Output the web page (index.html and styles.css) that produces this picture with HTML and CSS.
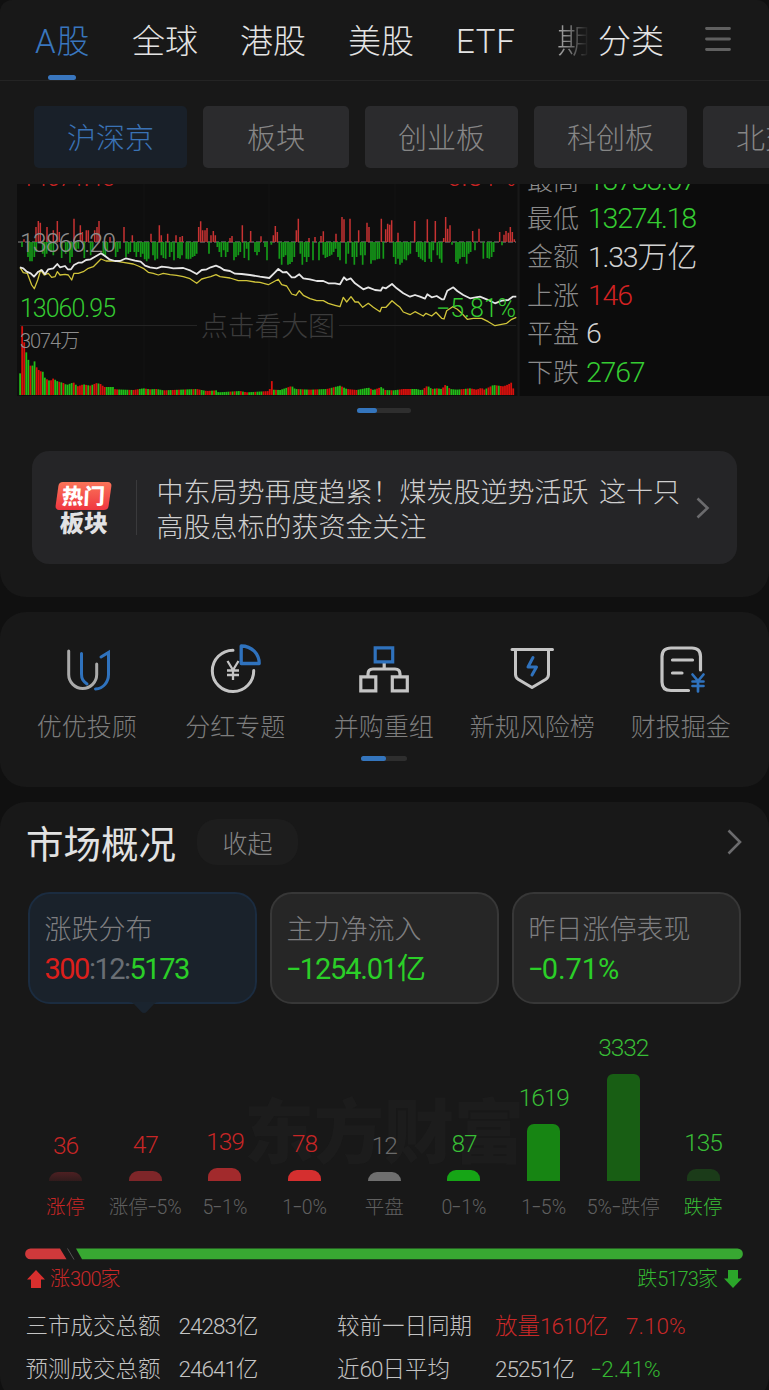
FILE: index.html
```
<!DOCTYPE html>
<html lang="zh-CN">
<head>
<meta charset="utf-8">
<title>行情</title>
<link rel="stylesheet" href="styles.css">
</head>
<body>
<section class="panel panel-top">
  <nav class="tabs">
    <span class="tab active">A股</span>
    <span class="tab">全球</span>
    <span class="tab">港股</span>
    <span class="tab">美股</span>
    <span class="tab etf">ETF</span>
    <span class="tab fading">期</span>
    <span class="tab last">分类</span>
    <svg class="menu" width="26" height="26" viewBox="0 0 26 26"><path d="M1.5 2.500h23M1.500 13h23M1.500 23.500h23" stroke="#606060" stroke-width="2.800" stroke-linecap="round"/></svg>
  </nav>
  <div class="pills">
    <span class="pill active">沪深京</span>
    <span class="pill short">板块</span>
    <span class="pill">创业板</span>
    <span class="pill">科创板</span>
    <span class="pill">北交所</span>
  </div>
  <div class="market">
    <svg class="chart" width="503" height="212" viewBox="17 184 503 212">
      <g id="chart-grid"></g>
      <text class="c-watermark" x="201" y="336" textLength="134">点击看大图</text>
      <g id="chart-plot"></g>
      <text class="c-num red" x="21" y="185.500" textLength="94">14671.45</text>
      <text class="c-num red" x="447" y="185.500" textLength="69">5.81%</text>
      <text class="c-num gray" x="20" y="251.500" textLength="96">13866.20</text>
      <text class="c-num green" x="20" y="317" textLength="96">13060.95</text>
      <text class="c-num green" x="436" y="317" textLength="80">−5.81%</text>
      <text class="c-vol" x="20" y="348" textLength="60">3074万</text>
    </svg>
    <dl class="quotes">
      <dt>最高</dt><dd class="green">13783.07</dd>
      <dt>最低</dt><dd class="green">13274.18</dd>
      <dt>金额</dt><dd>1.33<b>万亿</b></dd>
      <dt>上涨</dt><dd class="red">146</dd>
      <dt>平盘</dt><dd class="near">6</dd>
      <dt>下跌</dt><dd class="green near">2767</dd>
    </dl>
  </div>
  <div class="pager wide"><i></i></div>
  <div class="news">
    <div class="hot"><span class="hot-a"><em>热门</em></span><span class="hot-b">板块</span></div>
    <p>中东局势再度趋紧！煤炭股逆势活跃<span class="sp"> </span>这十只<br>高股息标的获资金关注</p>
    <svg width="16" height="24" viewBox="0 0 16 24"><path d="M2.500 2.500L12.500 12L2.500 21.500" fill="none" stroke="#6b6b6d" stroke-width="2.600"/></svg>
  </div>
</section>

<section class="panel panel-services">
  <div class="services">
    <div class="service">
      <svg width="54" height="54" viewBox="0 0 54 54" fill="none" stroke-width="3" stroke-linecap="round"><path d="M21.500 10.500v20.500c0 5 1.500 7 5.500 10M41 14l7.500-4.500v22c0 7.500-5 14-13 14.500" stroke="#2f72bd"/><path d="M8.700 8v23.500a14 14 0 0 0 28 0V21" stroke="#aaa"/></svg>
      <span>优优投顾</span>
    </div>
    <div class="service">
      <svg width="54" height="54" viewBox="0 0 54 54" fill="none" stroke-width="3"><path d="M25 7.200A20.700 20.700 0 1 0 45.700 27.500" stroke="#c4c4c4" stroke-linecap="round"/><path d="M19.500 18l5.500 9 5.500-9M25 27V37M19 27.500h12M19 32h12" stroke="#c4c4c4" stroke-width="2.300"/><path d="M33.200 3v17.500h18C51.200 11 44 3 33.200 3z" stroke="#2f72bd" stroke-width="3.300" stroke-linejoin="round"/></svg>
      <span>分红专题</span>
    </div>
    <div class="service">
      <svg width="54" height="54" viewBox="0 0 54 54" fill="none" stroke="#c4c4c4" stroke-width="3.200"><path d="M27.200 19v7M11 33v-2q0-5 5-5h22q5 0 5 5v2"/><path d="M3.800 33.800h15v14h-15zM35.300 33.800h15v14h-15z"/><path d="M18.200 4.800h17.500v14h-17.500z" stroke="#2f72bd"/></svg>
      <span>并购重组</span>
    </div>
    <div class="service">
      <svg width="54" height="54" viewBox="0 0 54 54" fill="none" stroke="#c4c4c4" stroke-width="3" stroke-linecap="round" stroke-linejoin="round"><path d="M7 6.500h40.500M10.500 6.500v25q0 3 3 5l13.500 8 13.500-8q3-2 3-5V6.500"/><path d="M28 14.500L23 24h8.500L27 32" stroke="#2f72bd"/></svg>
      <span>新规风险榜</span>
    </div>
    <div class="service">
      <svg width="54" height="54" viewBox="0 0 54 54" fill="none" stroke="#c4c4c4" stroke-width="3.200" stroke-linecap="round"><path d="M46.500 27V13.500q0-8.500-8.500-8.500H17q-9 0-9 8.500V39q0 8.500 9 8.500h17.500M18.500 17h20M18.500 30h9.500"/><path d="M38.500 31.500l5.500 6.500 5.500-6.500M44 38v10.500M38.500 38.500h11M38.500 43h11" stroke="#2f72bd" stroke-width="2.700"/></svg>
      <span>财报掘金</span>
    </div>
  </div>
  <div class="pager"><i></i></div>
</section>

<section class="panel panel-overview">
  <header class="overview-head">
    <h2>市场概况</h2>
    <span class="fold">收起</span>
    <svg width="17" height="28" viewBox="0 0 17 28"><path d="M2.500 2.500L14 14L2.500 25.500" fill="none" stroke="#6b6b6d" stroke-width="2.600"/></svg>
  </header>
  <div class="cards">
    <div class="card selected">
      <span class="card-label">涨跌分布</span>
      <span class="card-value ratio-value"><i class="red">300</i><i class="dim">:12:</i><i class="green">5173</i></span>
      <svg class="notch" width="30" height="13" viewBox="0 0 30 13"><path d="M0 0h30q-3 0-5 2l-7 7.500q-3 3-6 0L5 2Q3 0 0 0z" fill="#1a242f"/></svg>
    </div>
    <div class="card">
      <span class="card-label">主力净流入</span>
      <span class="card-value green"><s>-</s>1254.01<b>亿</b></span>
    </div>
    <div class="card">
      <span class="card-label">昨日涨停表现</span>
      <span class="card-value green loose"><s>-</s>0.71%</span>
    </div>
  </div>
  <div class="distribution">
    <div class="brand">东方财富</div>
    <div class="columns">
      <div class="col c1"><span>36</span><i></i><em>涨停</em></div>
      <div class="col c2"><span>47</span><i></i><em>涨停<s>-</s>5%</em></div>
      <div class="col c3"><span>139</span><i></i><em>5<s>-</s>1%</em></div>
      <div class="col c4"><span>78</span><i></i><em>1<s>-</s>0%</em></div>
      <div class="col c5"><span>12</span><i></i><em>平盘</em></div>
      <div class="col c6"><span>87</span><i></i><em>0<s>-</s>1%</em></div>
      <div class="col c7"><span>1619</span><i></i><em>1<s>-</s>5%</em></div>
      <div class="col c8"><span>3332</span><i></i><em>5%<s>-</s>跌停</em></div>
      <div class="col c9"><span>135</span><i></i><em>跌停</em></div>
    </div>
  </div>
  <svg class="ratio" width="718" height="12" viewBox="0 0 718 12"><path d="M5.500 .5H35L41.500 11.300H5.500a5.400 5.400 0 0 1 0-10.800z" fill="#cf393b"/><path d="M42.500 .5l6.500 11" stroke="#555"/><path d="M51 .5H712.500a5.400 5.400 0 0 1 0 10.800H57z" fill="#38a832"/></svg>
  <div class="ratio-legend">
    <span class="up"><svg width="18" height="18" viewBox="0 0 18 18"><path d="M9 0l9 9.500h-4V18H4V9.500H0z" fill="#d92f2e"/></svg>涨<i>300</i>家</span>
    <span class="down">跌<i>5173</i>家<svg width="18" height="18" viewBox="0 0 18 18"><path d="M9 18l9-9.500h-4V0H4V8.500H0z" fill="#2ba62a"/></svg></span>
  </div>
  <div class="totals">
    <span>三市成交总额</span><span><i>24283</i>亿</span><span>较前一日同期</span><span class="red">放量<i>1610</i>亿</span><span class="red pct1">7.10%</span>
    <span>预测成交总额</span><span><i>24641</i>亿</span><span>近<i>60</i>日平均</span><span><i>25251</i>亿</span><span class="green pct2"><s>-</s>2.41%</span>
  </div>
</section>
<script src="chart.js"></script>
</body>
</html>
```
FILE: styles.css
```
* { box-sizing: border-box; }
body {
  margin: 0;
  width: 769px;
  height: 1390px;
  overflow: hidden;
  background: #101010;
  color: #d2d2d2;
  font-family: Roboto, "Noto Sans CJK SC", sans-serif;
  font-weight: 300;
}
i, em { font-style: normal; }
b { font-weight: inherit; }
s { display: inline-block; text-decoration: none; font-family: Inter, sans-serif; letter-spacing: 0; line-height: 1; transform: translateY(-.03em) scaleX(1.2); }
p, h2, dl, dd { margin: 0; }
.red { color: #d32222; }
.green { color: #35cb32; }

.panel { background: #181818; border-radius: 26px; overflow: hidden; }
.panel-top { height: 597px; border-radius: 12px 12px 26px 26px; }
.panel-services { height: 175px; margin-top: 15px; }
.panel-overview { height: 600px; margin-top: 15px; padding: 17px 26px 0 25px; }

.tabs {
  display: flex;
  height: 81px;
  padding-left: 34px;
  border-bottom: 1px solid #242424;
  font-size: 33px;
  line-height: 83px;
  white-space: nowrap;
}
.tab { width: 108px; flex: none; color: #e4e4e4; }
.tab.active {
  position: relative;
  width: 98px;
  padding-left: 1px;
  color: #3976be;
  letter-spacing: .8px;
}
.tab.active::after {
  content: "";
  position: absolute;
  left: 14px;
  top: 75px;
  width: 28px;
  height: 5px;
  border-radius: 2.500px;
  background: #3976be;
}
.tab.etf { width: 101px; letter-spacing: .7px; }
.tab.fading {
  width: 41px;
  background: linear-gradient(90deg, #aaa 0, #777 40%, #2a2a2a 85%, #181818 100%);
  background-size: 33px 100%;
  background-repeat: no-repeat;
  background-clip: text;
  -webkit-background-clip: text;
  color: transparent;
}
.tab.last { width: 107px; }
.menu { margin-top: 26px; }

.pills { display: flex; gap: 16px; height: 103px; padding: 25px 0 0 34px; }
.pill {
  flex: none;
  width: 153px;
  height: 62px;
  border-radius: 5px;
  background: #2b2b2d;
  color: #868686;
  font-size: 29px;
  line-height: 67px;
  text-align: center;
}
.pill.short { width: 146px; }
.pill.active { background: #192029; color: #3a72b5; }
.market { display: flex; height: 212px; padding-left: 17px; background: linear-gradient(90deg, #181818 17px, #0c0c0c 17px); }
.chart { flex: none; overflow: hidden; background: #0e0e0e; }
.c-num { font-size: 25px; }
.c-num.red { fill: #c92323; }
.c-num.green { fill: #35cb32; }
.c-num.gray { fill: #8d8d8d; }
.c-vol { font-size: 20px; fill: #8d8d8d; }
.c-watermark { font-size: 27px; fill: #3b3b3b; }
.quotes {
  display: grid;
  grid-template-columns: 61px auto;
  grid-auto-rows: 38.400px;
  height: 212px;
  padding: 0 0 4px 7px;
  overflow: hidden;
  align-content: end;
  line-height: 38px;
  font-size: 26px;
  white-space: nowrap;
}
.quotes dt { color: #8b8b8b; }
.quotes dd { font-size: 28.500px; letter-spacing: -1.200px; }
.quotes dd.near { margin-left: -2px; }
.quotes dd b { font-size: 30px; letter-spacing: 0; }

.pager { width: 46px; height: 5px; border-radius: 3px; background: #2e2e2e; margin: 0 0 0 361px; }
.pager i { display: block; width: 25px; height: 5px; border-radius: 3px; background: #3475bd; }
.pager.wide { width: 54px; margin: 12px 0 0 357px; }
.pager.wide i { width: 20px; }

.news {
  display: flex;
  align-items: center;
  width: 705px;
  height: 113px;
  margin: 38px 0 0 32px;
  border-radius: 17px;
  background: #252527;
}
.hot {
  display: flex;
  flex-direction: column;
  width: 105px;
  height: 55px;
  padding-left: 25px;
  border-right: 1px solid #3a3a3c;
  font-weight: 900;
}
.hot-a {
  width: 53px;
  height: 28px;
  margin-top: 2px;
  flex: none;
  border-radius: 4px;
  background: linear-gradient(#fb7459, #ef3640);
  transform: skewX(-8deg);
  color: #fff;
  font-size: 21.500px;
  line-height: 29px;
  text-align: center;
}
.hot-a em { display: block; transform: skewX(5deg); }
.hot-b { width: 54px; font-size: 24px; line-height: 29px; color: #e2e2e4; transform: skewX(-3deg); text-align: center; }
.news p { width: 539px; padding: 7px 0 0 19.500px; font-size: 27px; line-height: 35px; white-space: nowrap; color: #cfcfcf; }
.sp { letter-spacing: 4px; }
.news svg { margin-left: 19px; }

.services { display: grid; grid-template-columns: repeat(5, 148.500px); height: 144px; padding: 31px 0 0 12.500px; }
.service { display: flex; flex-direction: column; align-items: center; font-size: 25px; line-height: 40px; color: #7d7d7d; white-space: nowrap; }
.service svg { margin-bottom: 11px; flex: none; }

.overview-head { display: flex; align-items: center; height: 46px; }
.overview-head h2 { width: 172px; padding: 5px 0 0 1px; font-size: 37.500px; line-height: 46px; font-weight: 400; color: #e2e2e2; }
.fold { width: 101px; height: 46px; border-radius: 20px; background: #1d1d1d; font-size: 25px; line-height: 51px; text-align: center; color: #858585; }
.overview-head svg { margin-left: auto; }
.cards { display: grid; grid-template-columns: repeat(3, 229px); column-gap: 13px; margin: 27px 0 0 2.500px; height: 112px; }
.card {
  position: relative;
  display: flex;
  flex-direction: column;
  padding: 17px 0 0 15px;
  border: 2px solid #373737;
  border-radius: 22px;
  background: #262626;
  white-space: nowrap;
}
.card.selected { background: #1a222b; border-color: #1b2c40; }
.card-label { font-size: 27px; line-height: 38px; color: #7e7e80; }
.card-value { font-size: 29px; line-height: 40px; letter-spacing: -1.200px; font-weight: 400; }
.card-value.ratio-value { letter-spacing: -1.500px; }
.card-value.loose { letter-spacing: -.1px; }
.card-value.green, .card-value .green { color: #2bcf28; }
.card-value .red { color: #dc1f1b; }
.card-value .dim { color: #696e74; }
.notch { position: absolute; left: 99px; top: 108px; }

.distribution { display: grid; height: 244px; }
.brand { grid-area: 1 / 1; padding: 91px 0 0 219px; font-size: 70px; line-height: 78px; font-weight: 900; color: #1c1c1c; }
.columns { grid-area: 1 / 1; display: grid; grid-template-columns: repeat(9, 79.700px); height: 221px; padding-left: .7px; }
.col { display: flex; flex-direction: column; align-items: center; justify-content: flex-end; white-space: nowrap; }
.col span { font-size: 24.500px; line-height: 26px; letter-spacing: -1.100px; margin-bottom: 13.500px; }
.col i { width: 33px; flex: none; border-radius: 9px 9px 0 0; }
.col em { margin-top: 12px; height: 32px; font-size: 19.500px; line-height: 30px; color: #606060; }
.c1 span, .c2 span, .c3 span, .c4 span, .c1 em { color: #c82626; }
.c6 span, .c7 span, .c8 span, .c9 span, .c9 em { color: #38bd36; }
.c5 span { color: #6a6a6a; }
.c1 i { height: 9px; background: linear-gradient(#4d2022, #301b1c); }
.c2 i { height: 10px; background: #7e2629; }
.c3 i { height: 13px; background: #a22a2c; }
.c4 i { height: 11px; background: #d52f2f; }
.c5 i { height: 9px; background: #6f6f6f; }
.c6 i { height: 11px; background: #16a516; }
.c7 i { height: 57px; border-radius: 7px 7px 0 0; background: #178513; }
.c8 i { height: 107px; border-radius: 6px 6px 0 0; background: #185e14; }
.c9 i { height: 12px; background: #1b3b19; }
.ratio { display: block; }
.ratio-legend { display: flex; justify-content: space-between; height: 46px; padding-top: 4px; font-size: 20px; line-height: 30px; }
.ratio-legend i, .totals i { letter-spacing: -.045em; }
.ratio-legend span { display: flex; align-items: center; height: 30px; }
.up { color: #c92828; }
.up svg { margin: 0 5px 0 2px; }
.down { color: #33b530; }
.down svg { margin: 0 1px 0 6px; }
.totals { display: grid; grid-template-columns: 153px 158.500px 158px 96px auto; grid-auto-rows: 43px; padding-left: .6px; font-size: 22.500px; line-height: 41px; white-space: nowrap; color: #c4c4c4; }
.totals .red { color: #c92828; }
.totals .green { color: #35b832; }
.pct1 { padding-left: 35px; }
```
FILE: chart.js
```
// Plot coordinates are stored at 3x, relative to y = 180; samples are 6.19 units apart.
const NS = 'http://www.w3.org/2000/svg';
const grid = document.getElementById('chart-grid');
const plot = document.getElementById('chart-plot');

function add(parent, name, attrs) {
  const el = document.createElementNS(NS, name);
  for (const k in attrs) el.setAttribute(k, attrs[k]);
  parent.appendChild(el);
}
const px = x => x / 3;
const py = y => 180 + y / 3;

[144, 269, 395].forEach(x => add(grid, 'path', { d: `M${x} 184V396`, stroke: '#131313' }));
add(grid, 'path', { d: 'M20 325.5H197M339 325.5H516', stroke: '#242424' });
add(grid, 'path', { d: 'M518.5 184V396', stroke: '#181818', 'stroke-width': 2 });

const up = '72,8 108,45 115,63 121,58 141,45 160,35 172,63 178,30 222,70 241,50 247,30 259,35 265,35 284,35 291,45 297,63 330,15 372,45 397,20 453,25 478,50 484,20 503,25 528,20 540,15 547,18 596,45 602,62 608,35 615,35 621,42 633,20 640,33 646,20 690,12 696,18 727,50 752,33 783,17 820,20 826,48 832,30 889,35 895,70 927,12 945,15 963,18 970,32 1008,25 1026,75 1032,68 1050,70 1076,35 1101,58 1107,45 1144,70 1157,38 1163,55 1169,52 1175,65 1194,28 1244,63 1282,68 1306,63 1331,12 1337,75 1343,40 1350,50 1418,33 1437,40 1499,30 1512,22 1518,33 1525,28 1531,45 1537,30 1543,8';
const down = '66,15 84,45 90,58 96,58 103,45 109,30 128,35 134,45 140,35 147,25 153,30 160,40 185,48 197,35 203,30 210,62 216,45 228,25 235,20 253,48 272,40 278,30 310,40 316,45 322,25 340,20 347,45 353,30 360,20 378,45 385,35 391,30 403,30 409,45 415,30 422,45 428,35 434,52 440,58 446,50 459,40 465,55 472,50 484,40 490,48 497,50 509,45 515,30 522,55 534,48 540,50 546,40 559,50 565,52 572,50 578,45 584,42 590,35 627,35 652,15 658,30 664,45 671,25 677,45 683,30 702,55 708,45 715,40 721,30 733,48 740,20 746,55 765,30 771,40 777,30 795,15 801,55 814,8 838,50 845,68 851,45 857,40 864,68 870,66 876,60 883,45 901,35 907,68 914,45 920,60 926,45 939,55 957,55 970,38 976,48 982,45 989,42 995,38 1001,30 1007,20 1014,45 1020,55 1038,65 1045,35 1057,45 1063,68 1070,45 1082,40 1088,68 1095,40 1113,65 1119,55 1125,55 1132,52 1138,50 1150,50 1181,45 1187,66 1194,50 1200,68 1206,62 1213,52 1219,55 1225,40 1231,35 1250,30 1256,45 1262,50 1268,55 1275,60 1288,50 1294,60 1300,25 1312,40 1319,50 1325,62 1356,8 1368,60 1374,65 1380,50 1387,45 1393,45 1400,65 1406,35 1412,30 1425,25 1450,50 1462,48 1468,50 1475,45 1481,30 1506,10';
const parse = s => s.split(' ').map(p => p.split(',').map(Number));

add(plot, 'path', { d: 'M18 242H516', stroke: '#858585', 'stroke-dasharray': '5 2' });
add(plot, 'path', { d: parse(up).map(([x, h]) => `M${px(x)} 242V${242 - h / 3}`).join(''), stroke: '#c73232', 'stroke-width': 1.5 });
add(plot, 'path', { d: parse(down).map(([x, h]) => `M${px(x)} 242V${242 + h / 3}`).join(''), stroke: '#149a18', 'stroke-width': 1.7 });

const price = '60,262 70,265 80,275 92,280 102,290 115,275 125,270 135,283 145,268 160,265 172,252 180,262 195,258 203,268 213,268 222,255 235,248 245,248 258,240 272,238 285,230 303,220 315,228 328,238 345,243 360,243 378,235 390,238 405,242 422,245 435,257 450,262 470,265 485,260 505,262 520,265 550,264 572,272 590,282 605,270 620,268 632,262 648,257 660,262 672,270 690,273 705,281 725,282 750,285 780,290 808,294 822,280 835,267 848,277 860,276 875,292 885,292 898,283 910,295 930,298 950,303 970,303 985,310 1005,310 1020,313 1032,292 1040,300 1052,295 1065,310 1090,328 1105,322 1125,330 1142,332 1148,322 1158,325 1176,312 1190,325 1210,340 1230,350 1245,345 1260,350 1275,356 1282,343 1295,352 1310,348 1325,358 1332,358 1342,332 1360,322 1372,333 1390,345 1410,355 1440,350 1460,358 1485,370 1505,362 1525,360 1538,350 1549,350';
const average = '60,262 70,278 82,280 95,315 103,326 113,300 122,270 133,285 145,280 155,292 165,290 172,275 180,285 195,283 205,285 215,300 222,280 235,280 250,275 265,265 280,260 303,237 318,243 345,243 370,247 400,252 415,258 430,265 445,277 460,280 475,285 490,280 510,284 530,286 550,290 570,296 590,310 605,297 620,293 632,290 648,284 660,290 690,294 715,302 740,302 765,306 780,307 805,314 820,306 835,298 845,314 860,318 875,342 888,346 898,332 910,346 930,356 950,362 970,362 985,370 1005,376 1020,380 1030,352 1040,366 1053,350 1065,366 1075,366 1088,382 1105,370 1120,382 1140,395 1145,382 1158,382 1176,362 1190,374 1200,382 1210,396 1230,404 1245,395 1270,408 1278,400 1295,408 1308,397 1325,415 1332,417 1340,392 1358,380 1372,388 1385,400 1402,418 1420,415 1445,415 1465,425 1485,437 1520,430 1535,418 1549,412';
const line = s => 'M' + parse(s).map(([x, y]) => `${px(x).toFixed(1)} ${py(y).toFixed(1)}`).join('L');
add(plot, 'path', { d: line(average), fill: 'none', stroke: '#d0c43a', 'stroke-width': 1.3, 'stroke-linejoin': 'round' });
add(plot, 'path', { d: line(price), fill: 'none', stroke: '#e6e6e6', 'stroke-width': 1.8, 'stroke-linejoin': 'round' });

// Volume: an interpolated envelope, coloured by runs of rising and falling minutes.
const env = parse('60,65 66,208 72,160 78,130 84,108 90,88 97,88 103,102 108,85 118,72 128,70 135,50 150,42 160,50 170,42 190,36 200,30 220,38 232,26 250,32 270,28 290,36 305,32 310,24 340,24 345,17 400,15 430,20 450,17 470,18 490,14 590,18 620,12 648,14 655,8 720,12 740,8 808,12 814,48 820,16 840,15 875,27 885,18 930,16 980,18 1020,28 1040,18 1070,15 1105,22 1120,15 1144,24 1155,15 1180,14 1210,18 1250,18 1265,14 1282,28 1295,18 1310,20 1325,18 1337,32 1350,18 1370,16 1410,20 1430,16 1445,22 1450,15 1480,30 1510,26 1525,32 1535,38 1543,5');
const runs = 'grrggrggrrrggrgrrggrgrggggrgrrrgrgrgrrgrrrggggrrgggggrgrrrgggrgrggrgggrrggrrgrggrgggrgrrggrrrgrgggggggrgrggrgrrgggrgggrrrrrgrgggggrrgggrgrggrrgrrggggrrgrgggrggrrrrrggggggrggrrggrggrgggrrrrrrggggggrrggrgrggrrgrgggggrrgrgrrrrrrr';
for (let n = 0, k = 0; n < 240; n++) {
  const x = 60 + n * 6.19;
  while (k < env.length - 2 && env[k + 1][0] < x) k++;
  const [x0, h0] = env[k], [x1, h1] = env[k + 1];
  const h = h0 + (h1 - h0) * Math.min(1, (x - x0) / (x1 - x0));
  const c = n > 232 ? 'r' : runs[n % runs.length];
  add(plot, 'rect', { x: px(x) - .8, y: 395 - h / 3, width: 1.8, height: h / 3, fill: c === 'r' ? '#d8100c' : '#22bd18' });
}
```
